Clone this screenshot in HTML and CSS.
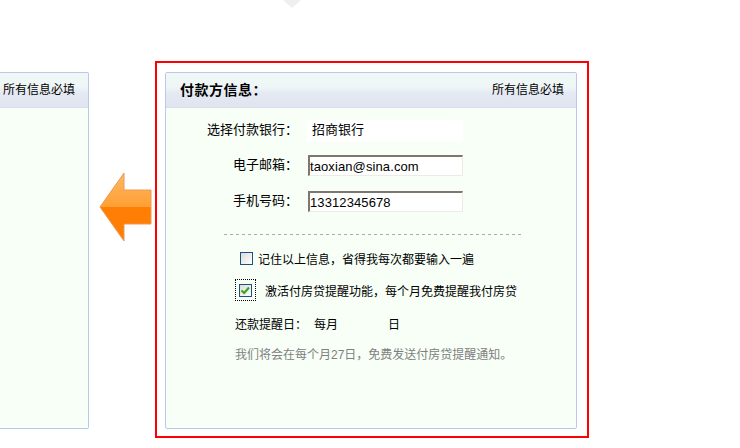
FILE: index.html
```html
<!DOCTYPE html>
<html lang="zh-CN">
<head>
<meta charset="utf-8">
<title>付款方信息</title>
<link rel="stylesheet" href="styles.css">
</head>
<body>
<svg class="notch" width="18" height="8" viewBox="0 0 18 8"><path d="M0 0H18L9 8Z" fill="#efefef"/></svg>
<main class="stage">
  <section class="panel panel-prev">
    <div class="panel-head panel-head-prev"><span class="note">所有信息必填</span></div>
  </section>
  <svg class="arrow" width="53" height="70" viewBox="0 0 53 70">
    <defs>
      <linearGradient id="arrow-top" x1="0" y1="0" x2="0" y2="1">
        <stop offset="0" stop-color="#ffb866"/>
        <stop offset="1" stop-color="#ff9f33"/>
      </linearGradient>
    </defs>
    <path d="M25 1V18H52V35H1Z" fill="url(#arrow-top)"/>
    <path d="M1 35H52V52H25V69Z" fill="#ff7f05"/>
    <path d="M25 1V18H52V52H25V69L1 35Z" fill="none" stroke="#ea9a55" stroke-width="1"/>
  </svg>
  <div class="highlight">
    <section class="panel panel-main">
      <div class="panel-head">
        <h2 class="title">付款方信息：</h2>
        <span class="note">所有信息必填</span>
      </div>
      <form class="form">
        <div class="fields">
          <label class="field-label">选择付款银行：</label>
          <div class="bank">招商银行</div>
          <label class="field-label field-email">电子邮箱：</label>
          <input class="text-input field-email" type="text" value="taoxian@sina.com">
          <label class="field-label field-phone">手机号码：</label>
          <input class="text-input field-phone" type="text" value="13312345678">
        </div>
        <div class="divider"></div>
        <div class="check-row check-remember">
          <span class="box"></span>
          <span class="check-text">记住以上信息，省得我每次都要输入一遍</span>
        </div>
        <div class="check-row check-remind">
          <span class="focus-ring">
            <span class="box">
              <svg width="11" height="11" viewBox="0 0 11 11"><path d="M1.5 5.5L4.2 8L9 2.5" fill="none" stroke="#3aa51f" stroke-width="2.2"/></svg>
            </span>
          </span>
          <span class="check-text">激活付房贷提醒功能，每个月免费提醒我付房贷</span>
        </div>
        <div class="due-row">
          <span class="due-label">还款提醒日：</span>
          <span class="due-month">每月</span>
          <span>日</span>
        </div>
        <p class="hint">我们将会在每个月27日，免费发送付房贷提醒通知。</p>
      </form>
    </section>
  </div>
</main>
</body>
</html>
```
FILE: styles.css
```css
html, body {
  margin: 0;
  padding: 0;
  background: #fff;
}
body {
  width: 740px;
  height: 448px;
  overflow: hidden;
  position: relative;
  font-family: "Liberation Sans", "Noto Sans CJK SC", sans-serif;
  font-size: 12px;
  line-height: 14px;
  color: #000;
}
.notch {
  position: absolute;
  left: 283px;
  top: 0;
}
.stage {
  display: flex;
  align-items: flex-start;
  padding-top: 61px;
}
.panel {
  box-sizing: border-box;
  height: 357px;
  background: #f7fff7;
  border: 1px solid #bbc8ee;
  border-radius: 2px;
}
.panel-prev {
  width: 89px;
  margin-top: 11px;
  border-left: 0;
  border-radius: 0 2px 2px 0;
}
.panel-head {
  height: 35px;
  box-sizing: border-box;
  display: flex;
  justify-content: space-between;
  align-items: center;
  padding: 0 12px 0 14px;
  background: linear-gradient(#eff7f7 0, #eff6f6 40%, #e4e9f4 60%, #dfe4ee 100%);
  border-bottom: 1px solid #dadcec;
}
.panel-head-prev {
  padding: 0 0 0 3px;
}
.title {
  margin: 0;
  font-size: 14px;
  font-weight: bold;
  letter-spacing: 0.5px;
}
.note {
  white-space: nowrap;
}
.arrow {
  flex: none;
  margin: 111px 0 0 10px;
}
.highlight {
  box-sizing: border-box;
  width: 434px;
  height: 377px;
  margin-left: 3px;
  padding: 9px 10px 0 8px;
  border: 2px solid #f00;
}
.fields {
  display: grid;
  grid-template-columns: 132px 156px;
  column-gap: 9px;
  align-items: center;
  padding-top: 12px;
}
.field-label {
  font-size: 13px;
  text-align: right;
  padding-bottom: 2px;
}
.bank {
  height: 22px;
  line-height: 20px;
  font-size: 13px;
  padding-left: 5px;
  box-sizing: border-box;
  background: #fff;
}
.text-input {
  box-sizing: border-box;
  width: 155px;
  height: 21px;
  margin: 0 0 0 1px;
  padding: 1px 0 0 0;
  font-family: "Liberation Sans", sans-serif;
  font-size: 13px;
  letter-spacing: 0.1px;
  color: #000;
  background: #fff;
  border-style: solid;
  border-width: 2px 1px 1px 2px;
  border-color: #7f776d #ecebe4 #ecebe4 #7f776d;
  outline: 0;
}
.field-email {
  margin-top: 13px;
}
.field-phone {
  margin-top: 15px;
}
.divider {
  width: 297px;
  height: 1px;
  margin: 22px 0 0 58px;
  background: repeating-linear-gradient(90deg, #aaa 0, #aaa 3px, transparent 3px, transparent 6px);
}
.check-row {
  display: flex;
  align-items: center;
  white-space: nowrap;
}
.check-text {
  padding-top: 3px;
}
.check-remember {
  gap: 5px;
  margin-top: 15px;
  padding-left: 74px;
}
.check-remind {
  gap: 9px;
  margin-top: 12px;
  padding-left: 69px;
}
.box {
  box-sizing: border-box;
  flex: none;
  display: flex;
  align-items: center;
  justify-content: center;
  width: 13px;
  height: 13px;
  background: linear-gradient(135deg, #dcdcd5, #fff);
  border: 1px solid #1c5180;
}
.focus-ring {
  box-sizing: border-box;
  display: flex;
  align-items: center;
  justify-content: center;
  width: 21px;
  height: 22px;
  border: 1px dotted #000;
}
.due-row {
  display: flex;
  margin-top: 17px;
  padding-left: 69px;
}
.due-label {
  width: 79px;
}
.due-month {
  width: 74px;
}
.hint {
  margin: 16px 0 0 69px;
  color: #808080;
}
```
